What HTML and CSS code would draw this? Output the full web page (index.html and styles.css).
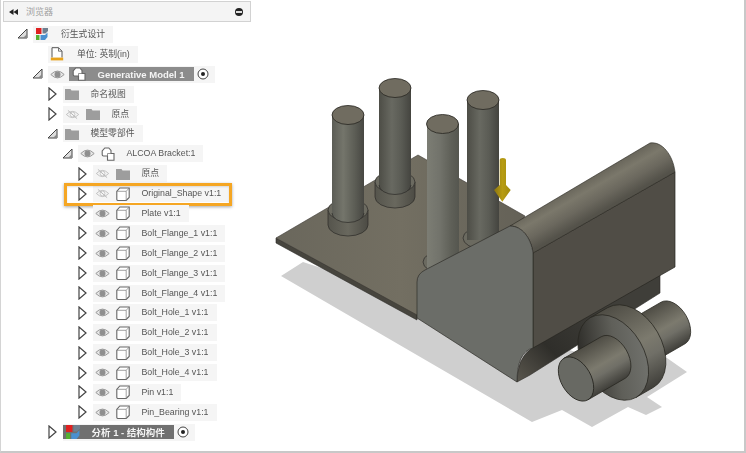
FILE: index.html
```html
<!DOCTYPE html>
<html lang="zh">
<head>
<meta charset="utf-8">
<title>浏览器</title>
<link rel="stylesheet" href="styles.css">
</head>
<body>
<svg class="defs" width="0" height="0" aria-hidden="true">
  <symbol id="cube" viewBox="0 0 14 14"><path d="M.8 4.300 3.800 1H13.200V10.500L10.200 13.500H2Q.8 13.500.8 12.300Z" fill="#fff" stroke="#666" stroke-width="1.100"/><path d="M.8 4.300H10.200V13.500M10.200 4.300 13.200 1" fill="none" stroke="#8a8a8a" stroke-width=".8"/></symbol>
  <symbol id="comp" viewBox="0 0 14 14"><path d="M1.200 6.500V4L3.800 1H7.800L10 3.500V6.500H13V13.300H6.500V9H2.500Q1.200 9 1.200 7.800Z" fill="#fff" stroke="#666" stroke-width="1.100"/><path d="M6.500 6.500H10M6.500 6.500V9" fill="none" stroke="#777" stroke-width=".8"/></symbol>
  <symbol id="folder" viewBox="0 0 14 12"><path d="M0 1H5.500L6.500 2.500H14V12H0Z" fill="#9d9d9d"/></symbol>
  <symbol id="eye" viewBox="0 0 15 10"><path d="M.8 5Q7.500-1.800 14.200 5 7.500 11.800.8 5Z" fill="#e6e6e6" stroke="#999"/><circle cx="7.500" cy="5" r="3" fill="#8f8f8f"/></symbol>
  <symbol id="eyeoff" viewBox="0 0 15 12"><path d="M.8 6Q7.500-.8 14.200 6 7.500 12.800.8 6Z" fill="none" stroke="#bdbdbd"/><circle cx="7.500" cy="6" r="2.700" fill="none" stroke="#c4c4c4"/><path d="M2.500 1.500 12.500 10.500" stroke="#b5b5b5"/></symbol>
  <symbol id="open" viewBox="0 0 11 11"><path d="M1 10 10 1V10Z" fill="#ddd" stroke="#444"/><path d="M6 10 10 6V10Z" fill="#888"/></symbol>
  <symbol id="closed" viewBox="0 0 9 14"><path d="M1 1 8 7 1 13Z" fill="#fff" stroke="#444" stroke-width="1.200"/></symbol>
  <symbol id="radio" viewBox="0 0 12 12"><circle cx="6" cy="6" r="5" fill="#fff" stroke="#444"/><circle cx="6" cy="6" r="2" fill="#222"/></symbol>
  <symbol id="gen" viewBox="0 0 12 12"><rect x="0" y="0" width="5.500" height="6" fill="#e02020"/><path d="M6.500 0H12V3L9.500 5.500H6.500Z" fill="#6f7f8f"/><rect x="0" y="7" width="3.500" height="5" fill="#55b030"/><path d="M4.500 7H9L11.500 4.500V9L9 12H4.500Z" fill="#4a90d0"/></symbol>
  <symbol id="doc" viewBox="0 0 13 14"><path d="M1.500 10.500V.7H8L11.500 4.200V10.500" fill="#fff" stroke="#555"/><path d="M8 .7V4.200H11.500" fill="none" stroke="#555" stroke-width=".8"/><rect x=".3" y="10.600" width="12.400" height="2.800" fill="#e8a31c"/></symbol>
</svg>

<main class="frame">
  <svg class="scene" viewBox="0 0 746 453" width="746" height="453" aria-hidden="true">
    <defs>
      <linearGradient id="post"><stop offset="0" stop-color="#5b5c55"/><stop offset=".35" stop-color="#74756b"/><stop offset=".7" stop-color="#5d5e56"/><stop offset="1" stop-color="#474742"/></linearGradient>
      <linearGradient id="postB"><stop offset="0" stop-color="#4d4d46"/><stop offset=".4" stop-color="#686961"/><stop offset=".7" stop-color="#5a5b54"/><stop offset="1" stop-color="#44443f"/></linearGradient>
      <linearGradient id="postC"><stop offset="0" stop-color="#7c7d74"/><stop offset=".4" stop-color="#72736b"/><stop offset=".75" stop-color="#5f6058"/><stop offset="1" stop-color="#55564f"/></linearGradient>
      <linearGradient id="collar"><stop offset="0" stop-color="#55544c"/><stop offset=".5" stop-color="#69685e"/><stop offset="1" stop-color="#4c4b44"/></linearGradient>
      <linearGradient id="plate" x1="0" y1="0" x2="1" y2="0"><stop offset="0" stop-color="#6a675c"/><stop offset=".5" stop-color="#736f62"/><stop offset="1" stop-color="#646157"/></linearGradient>
      <linearGradient id="roll" gradientUnits="userSpaceOnUse" x1="572" y1="172" x2="596" y2="214"><stop offset="0" stop-color="#514e46"/><stop offset=".5" stop-color="#7b786b"/><stop offset=".75" stop-color="#6b685e"/><stop offset="1" stop-color="#54524a"/></linearGradient>
      <linearGradient id="under" gradientUnits="userSpaceOnUse" x1="517" y1="382" x2="600" y2="300"><stop offset="0" stop-color="#5a574e"/><stop offset=".4" stop-color="#2f2e2a"/><stop offset="1" stop-color="#3f3e39"/></linearGradient>
      <linearGradient id="cyl" x1="0" y1="0" x2="0" y2="1"><stop offset="0" stop-color="#4f4d45"/><stop offset=".5" stop-color="#7c7a6e"/><stop offset=".68" stop-color="#706f67"/><stop offset="1" stop-color="#403f3a"/></linearGradient>
      <linearGradient id="face" x1="0" y1=".5" x2="1" y2=".5" gradientTransform="rotate(30 .5 .5)"><stop offset="0" stop-color="#2f2e2a"/><stop offset=".55" stop-color="#5f5f59"/><stop offset="1" stop-color="#70716c"/></linearGradient>
      <linearGradient id="arrow"><stop offset="0" stop-color="#8a7410"/><stop offset=".5" stop-color="#b89c12"/><stop offset="1" stop-color="#a08a10"/></linearGradient>
    </defs>
    <polygon class="shadow" points="281,276 303,262 600,360 667,358 687,372 647,397 662,407 646,415 628,407 592,427 562,410 532,422"/>
    <polygon class="plate-side" points="276,238 276,243 417,320 417,314"/>
    <polygon class="plate-top" points="276,238 418,155 525,216 510,240 417,315"/>

    <g>
      <path class="collar" d="M328 210V225A20 11 0 0 0 368 225V210Z"/><ellipse class="collar-top" cx="348" cy="210" rx="20" ry="11"/>
      <path d="M332 115V213A16 9.500 0 0 0 364 213V115Z" fill="url(#post)"/><path class="line" d="M332 213A16 9.500 0 0 0 364 213"/><ellipse class="cap" cx="348" cy="115" rx="16" ry="9.500"/>
    </g>
    <g>
      <path class="collar" d="M375 182V197A20 11 0 0 0 415 197V182Z"/><ellipse class="collar-top" cx="395" cy="182" rx="20" ry="11"/>
      <path d="M379 88V185A16 9.500 0 0 0 411 185V88Z" fill="url(#postB)"/><path class="line" d="M379 185A16 9.500 0 0 0 411 185"/><ellipse class="cap" cx="395" cy="88" rx="16" ry="9.500"/>
    </g>
    <g>
      <ellipse class="collar-top" cx="483" cy="238" rx="20" ry="11"/>
      <path d="M467 100V240H499V100Z" fill="url(#postB)"/><ellipse class="cap" cx="483" cy="100" rx="16" ry="9.500"/>
    </g>
    <g>
      <ellipse class="collar-top" cx="443" cy="262" rx="20" ry="11"/>
      <path d="M427 124V270H459V124Z" fill="url(#postC)"/><ellipse class="cap" cx="442.500" cy="124" rx="16" ry="9.500"/>
    </g>
    <path d="M499.700 160Q499.700 158 502.800 158T506 160V185L510.700 190 502.300 201.700 494 190 499.700 185Z" fill="url(#arrow)"/>

    <path class="under" d="M532 348 660 275V293L530 375 517 382Q517 358 532 348Z"/>
    <path class="side" d="M533 253 675 172V267L533 348Z"/>
    <path class="rollface" d="M510 226 650 143C662 141 673 155 675 172L533 253C531 238 522 226 510 226Z"/>
    <path class="front" d="M417 318V282Q417 274 425 270L510 226C522 226 531 238 533 253V348Q517 352 517 382Z"/>

    <g transform="translate(576 379) rotate(-30)">
      <path class="cyl" d="M63 -24H112A15 24 0 0 1 112 24H63Z" fill="url(#cyl)"/>
      <path class="cyl" d="M43 -46H63A31 46 0 0 1 63 46H43Z" fill="url(#cyl)"/>
      <ellipse class="cyl" cx="43" cy="0" rx="31" ry="46" fill="url(#face)"/>
      <path class="cyl" d="M0 -24H43A15 24 0 0 1 43 24H0Z" fill="url(#cyl)"/>
      <ellipse class="pin-end" cx="0" cy="0" rx="15" ry="24"/>
    </g>
  </svg>

  <section class="panel">
    <header class="head">
      <svg class="back" viewBox="0 0 9 6"><path d="M4.500 0V6L0 3ZM9 0V6L4.500 3Z" fill="#222"/></svg>
      <span class="title">浏览器</span>
      <span class="minus"></span>
    </header>
    <div class="tree">
      <div class="row l0"><svg class="twist"><use href="#open" width="11" height="11" y="4"/></svg><span class="chip"><svg class="ic i12"><use href="#gen"/></svg><span class="lab wide">衍生式设计</span></span></div>
      <div class="row l1"><span class="twist"></span><span class="chip"><svg class="ic"><use href="#doc"/></svg><span class="lab wide">单位: 英制(in)</span></span></div>
      <div class="row l1"><svg class="twist"><use href="#open" width="11" height="11" y="4"/></svg><span class="chip"><svg class="eye"><use href="#eye"/></svg><span class="active"><svg class="ic"><use href="#comp"/></svg><span class="lab strong">Generative Model 1</span></span><svg class="radio"><use href="#radio"/></svg></span></div>
      <div class="row l2"><svg class="twist"><use href="#closed" width="9" height="14" x="1" y="3"/></svg><span class="chip"><svg class="ic"><use href="#folder"/></svg><span class="lab">命名视图</span></span></div>
      <div class="row l2"><svg class="twist"><use href="#closed" width="9" height="14" x="1" y="3"/></svg><span class="chip"><svg class="eye"><use href="#eyeoff"/></svg><svg class="ic"><use href="#folder"/></svg><span class="lab">原点</span></span></div>
      <div class="row l2"><svg class="twist"><use href="#open" width="11" height="11" y="4"/></svg><span class="chip"><svg class="ic"><use href="#folder"/></svg><span class="lab">模型零部件</span></span></div>
      <div class="row l3"><svg class="twist"><use href="#open" width="11" height="11" y="4"/></svg><span class="chip"><svg class="eye"><use href="#eye"/></svg><svg class="ic"><use href="#comp"/></svg><span class="lab">ALCOA Bracket:1</span></span></div>
      <div class="row l4"><svg class="twist"><use href="#closed" width="9" height="14" x="1" y="3"/></svg><span class="chip"><svg class="eye"><use href="#eyeoff"/></svg><svg class="ic"><use href="#folder"/></svg><span class="lab">原点</span></span></div>
      <div class="row l4 marked"><svg class="twist"><use href="#closed" width="9" height="14" x="1" y="3"/></svg><span class="chip"><svg class="eye"><use href="#eyeoff"/></svg><svg class="ic"><use href="#cube"/></svg><span class="lab">Original_Shape v1:1</span></span></div>
      <div class="row l4"><svg class="twist"><use href="#closed" width="9" height="14" x="1" y="3"/></svg><span class="chip"><svg class="eye"><use href="#eye"/></svg><svg class="ic"><use href="#cube"/></svg><span class="lab">Plate v1:1</span></span></div>
      <div class="row l4"><svg class="twist"><use href="#closed" width="9" height="14" x="1" y="3"/></svg><span class="chip"><svg class="eye"><use href="#eye"/></svg><svg class="ic"><use href="#cube"/></svg><span class="lab">Bolt_Flange_1 v1:1</span></span></div>
      <div class="row l4"><svg class="twist"><use href="#closed" width="9" height="14" x="1" y="3"/></svg><span class="chip"><svg class="eye"><use href="#eye"/></svg><svg class="ic"><use href="#cube"/></svg><span class="lab">Bolt_Flange_2 v1:1</span></span></div>
      <div class="row l4"><svg class="twist"><use href="#closed" width="9" height="14" x="1" y="3"/></svg><span class="chip"><svg class="eye"><use href="#eye"/></svg><svg class="ic"><use href="#cube"/></svg><span class="lab">Bolt_Flange_3 v1:1</span></span></div>
      <div class="row l4"><svg class="twist"><use href="#closed" width="9" height="14" x="1" y="3"/></svg><span class="chip"><svg class="eye"><use href="#eye"/></svg><svg class="ic"><use href="#cube"/></svg><span class="lab">Bolt_Flange_4 v1:1</span></span></div>
      <div class="row l4"><svg class="twist"><use href="#closed" width="9" height="14" x="1" y="3"/></svg><span class="chip"><svg class="eye"><use href="#eye"/></svg><svg class="ic"><use href="#cube"/></svg><span class="lab">Bolt_Hole_1 v1:1</span></span></div>
      <div class="row l4"><svg class="twist"><use href="#closed" width="9" height="14" x="1" y="3"/></svg><span class="chip"><svg class="eye"><use href="#eye"/></svg><svg class="ic"><use href="#cube"/></svg><span class="lab">Bolt_Hole_2 v1:1</span></span></div>
      <div class="row l4"><svg class="twist"><use href="#closed" width="9" height="14" x="1" y="3"/></svg><span class="chip"><svg class="eye"><use href="#eye"/></svg><svg class="ic"><use href="#cube"/></svg><span class="lab">Bolt_Hole_3 v1:1</span></span></div>
      <div class="row l4"><svg class="twist"><use href="#closed" width="9" height="14" x="1" y="3"/></svg><span class="chip"><svg class="eye"><use href="#eye"/></svg><svg class="ic"><use href="#cube"/></svg><span class="lab">Bolt_Hole_4 v1:1</span></span></div>
      <div class="row l4"><svg class="twist"><use href="#closed" width="9" height="14" x="1" y="3"/></svg><span class="chip"><svg class="eye"><use href="#eye"/></svg><svg class="ic"><use href="#cube"/></svg><span class="lab">Pin v1:1</span></span></div>
      <div class="row l4"><svg class="twist"><use href="#closed" width="9" height="14" x="1" y="3"/></svg><span class="chip"><svg class="eye"><use href="#eye"/></svg><svg class="ic"><use href="#cube"/></svg><span class="lab">Pin_Bearing v1:1</span></span></div>
      <div class="row l2"><svg class="twist"><use href="#closed" width="9" height="14" x="1" y="3"/></svg><span class="chip flush"><span class="active dark"><svg class="ic"><use href="#gen"/></svg><span class="lab strong">分析 1 - 结构构件</span></span><svg class="radio"><use href="#radio"/></svg></span></div>
    </div>
  </section>
</main>
</body>
</html>
```

FILE: styles.css
```css
* { box-sizing: border-box; }
html, body { margin: 0; padding: 0; background: #fff; }
body { width: 746px; height: 453px; overflow: hidden; }
.defs { position: absolute; }

.frame {
  position: relative;
  width: 746px;
  height: 453px;
  border-left: 1px solid #d4d4d4;
  border-right: 2px solid #c8c8c8;
  border-bottom: 2px solid #c8c8c8;
  font-family: "Liberation Sans", "Noto Sans CJK SC", sans-serif;
  font-size: 8.8px;
  color: #555;
}

.scene { position: absolute; left: -1px; top: 0; filter: blur(.3px); }
.shadow { fill: #cfcfcf; }
.plate-side { fill: #47453e; stroke: #2b2a27; stroke-width: .6; }
.plate-top { fill: url(#plate); stroke: #3a3833; stroke-width: .6; }
.collar { fill: url(#collar); stroke: #2b2a27; stroke-width: .7; }
.collar-top { fill: #6b6a60; stroke: #2b2a27; stroke-width: .7; }
.cap { fill: #706c60; stroke: #26251f; stroke-width: .8; }
.line { fill: none; stroke: #2b2a27; stroke-width: .7; }
.under { fill: url(#under); stroke: #2b2a27; stroke-width: .6; }
.side { fill: #504d46; stroke: #26251f; stroke-width: .7; }
.rollface { fill: url(#roll); stroke: #26251f; stroke-width: .6; }
.front { fill: #6b6d68; stroke: #2f2e2a; stroke-width: .7; }
.cyl { stroke: #26251f; stroke-width: .7; }
.pin-end { fill: #686963; stroke: #26251f; stroke-width: .8; }

.panel {
  position: relative;
  width: 250px;
  padding: 1px 0 0 2px;
  filter: blur(.4px);
}
.head {
  display: flex;
  align-items: center;
  width: 248px;
  height: 21px;
  padding: 0 7px 0 5px;
  background: #f4f4f4;
  border: 1px solid #d2d2d2;
}
.back { flex: none; width: 9px; height: 6px; margin-right: 8px; }
.title { flex: 1; font-size: 9px; color: #a0a0a0; }
.minus {
  position: relative;
  width: 8px;
  height: 8px;
  border-radius: 50%;
  background: #222;
}
.minus::after {
  content: "";
  position: absolute;
  left: 1px;
  right: 1px;
  top: 3px;
  height: 2px;
  background: #ddd;
}

.tree { padding-top: 2.5px; margin-left: -3px; }
.row {
  position: relative;
  display: flex;
  align-items: center;
  height: 19.9px;
}
.l0 { padding-left: 17px; }
.l1 { padding-left: 32px; }
.l2 { padding-left: 47px; }
.l3 { padding-left: 62px; }
.l4 { padding-left: 77px; }

.twist { flex: none; width: 16px; height: 20px; }
.chip {
  display: flex;
  align-items: center;
  height: 17px;
  padding: 0 8px 0 2px;
  background: #f5f5f5;
  white-space: nowrap;
}
.chip.flush { padding-left: 0; }
.ic { flex: none; width: 14px; height: 14px; }
.i12 { width: 12px; height: 12px; margin-left: 1px; }
.eye { flex: none; width: 15px; height: 11px; margin-right: 6px; }
.radio { flex: none; width: 12px; height: 12px; margin-left: 3px; margin-right: -2px; }
.lab { margin-left: 11.5px; line-height: 17px; font-size: 8.8px; }
.wide { margin-left: 13px; }
.active {
  display: flex;
  align-items: center;
  height: 14px;
  margin-left: -2px;
  padding: 0 9px 0 3px;
  background: #8c8c8c;
}
.dark { background: #707070; margin-left: 0; }
.strong { color: #f4f4f4; font-weight: 700; font-size: 9.5px; }

.marked::after {
  content: "";
  box-sizing: border-box;
  position: absolute;
  left: 64px;
  top: -1px;
  width: 168px;
  height: 23px;
  border: 3px solid #f5a623;
  box-shadow: 0 1px 3px rgba(0, 0, 0, .35), inset 0 1px 2px rgba(0, 0, 0, .12);
}
```
